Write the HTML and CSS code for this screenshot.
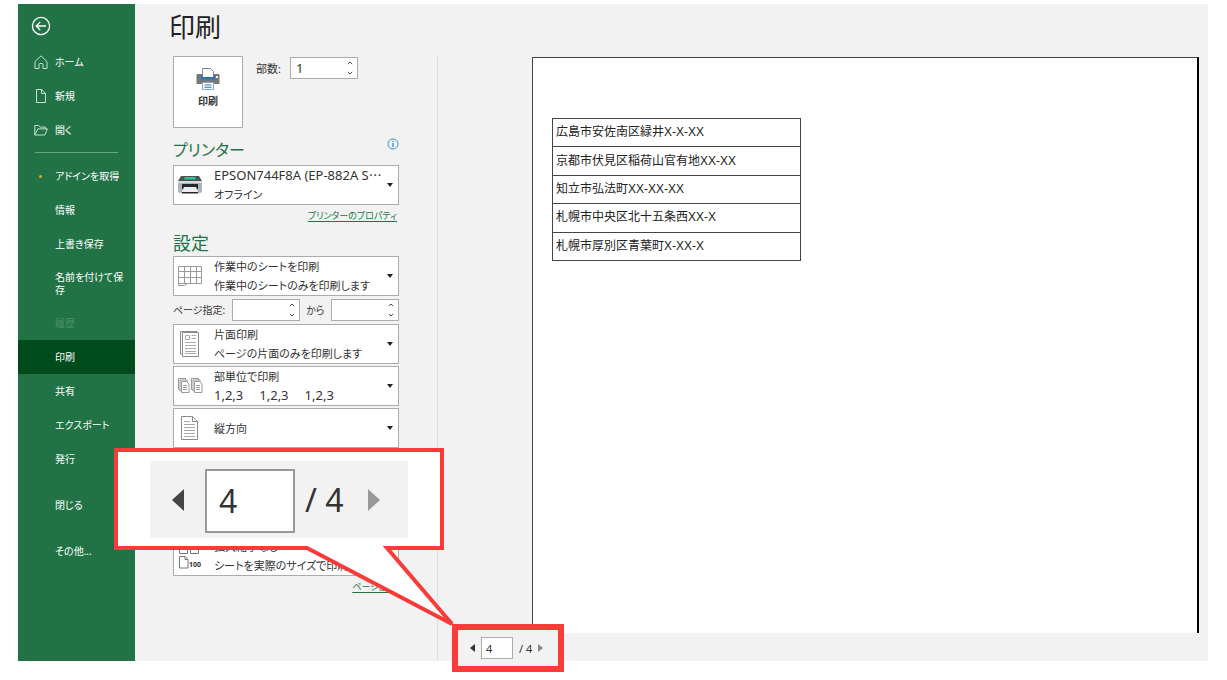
FILE: index.html
```html
<!DOCTYPE html>
<html lang="ja">
<head>
<meta charset="utf-8">
<meta name="viewport" content="width=device-width, initial-scale=1">
<title>印刷</title>
<link rel="stylesheet" href="styles.css">
</head>
<body>
<div class="app">
  <nav class="sidebar" aria-label="ファイル">
    <button class="back" type="button" aria-label="戻る">
      <svg width="20" height="20" viewBox="0 0 20 20" fill="none" stroke="#fff" stroke-width="1.3"><circle cx="10" cy="10" r="8.6"/><path d="M15 10H5.4M9.2 6L5.2 10l4 4"/></svg>
    </button>
    <a class="item" href="#"><svg class="item-icon" width="14" height="14" viewBox="0 0 14 14" fill="none" stroke="#c8dfd1"><path d="M1 6.600L7 .8l6 5.800v6.900H9V9.500q0-1-1-1H6q-1 0-1 1v4H1z"/></svg>ホーム</a>
    <a class="item" href="#"><svg class="item-icon" width="14" height="14" viewBox="0 0 14 14" fill="none" stroke="#c8dfd1"><path d="M2.500.5h5.200l3.800 3.800v9.200h-9zM7.500.5v4h4"/></svg>新規</a>
    <a class="item" href="#"><svg class="item-icon" width="14" height="14" viewBox="0 0 14 14" fill="none" stroke="#c8dfd1"><path d="M.8 12V2.500h4l1.500 1.600h5.200v1.800M.8 12l3-6.100h9.600L10.800 12z"/></svg>開く</a>
    <hr class="rule">
    <a class="item" href="#"><span class="item-icon dot"></span>アドインを取得</a>
    <a class="item" href="#">情報</a>
    <a class="item" href="#">上書き保存</a>
    <a class="item item-wrap" href="#">名前を付けて保存</a>
    <a class="item disabled" aria-disabled="true">履歴</a>
    <a class="item current" href="#" aria-current="page">印刷</a>
    <a class="item" href="#">共有</a>
    <a class="item" href="#">エクスポート</a>
    <a class="item" href="#">発行</a>
    <a class="item spaced" href="#">閉じる</a>
    <a class="item spaced" href="#">その他...</a>
  </nav>

  <main class="main">
    <h1 class="title">印刷</h1>
    <div class="columns">
      <section class="settings">
        <div class="print-row">
          <button class="print" type="button">
            <svg width="24" height="22" viewBox="0 0 24 22"><rect x="0.500" y="6" width="23" height="10" rx="1" fill="#777"/><path d="M6.500 9V.5h8l3 3V9" fill="#fff" stroke="#888"/><path d="M5 7h1.500v2h11V7H19v4.500H5z" fill="#2e75b6"/><rect x="20" y="8" width="2" height="2" fill="#fff"/><path d="M6.500 14.500h11v7h-11z" fill="#fff" stroke="#8aa9cc"/><path d="M8.500 17h7M8.500 19.300h7" stroke="#2e75b6"/></svg>
            <span>印刷</span>
          </button>
          <div class="copies">
            <label for="copies">部数:</label>
            <span class="spin"><input id="copies" type="text" inputmode="numeric" value="1"><svg width="6" height="14" viewBox="0 0 6 14" fill="none" stroke="#444"><path d="M.8 3L3 1l2.200 2M.8 11L3 13l2.200-2"/></svg></span>
          </div>
        </div>

        <div class="heading-row">
          <h2 class="kana">プリンター</h2>
          <svg width="12" height="12" viewBox="0 0 12 12" fill="none" stroke="#3b97d8"><circle cx="6" cy="6" r="5"/><path d="M6 5v4M6 2.800v1.200" stroke-width="1.400"/></svg>
        </div>
        <label class="picker">
          <svg class="pic" width="26" height="20" viewBox="0 0 26 20"><path d="M4 1h18l3 5H1z" fill="#4d5257"/><path d="M8 2h10l1 2.500H7z" fill="#2fc48d"/><path d="M1 6h24v10q0 2-2 2H3q-2 0-2-2z" fill="#a9b4bc"/><path d="M1 6h24v2H1z" fill="#d5dce0"/><rect x="5" y="9" width="16" height="5" fill="#25282b"/><path d="M7 12h12l2 5H5z" fill="#e9edf0"/><path d="M5 17h16v1.500H5z" fill="#25282b"/></svg>
          <span class="lines"><select class="latin"><option>EPSON744F8A (EP-882A S⋯</option></select><span>オフライン</span></span>
          <i class="caret"></i>
        </label>
        <a class="link" href="#">プリンターのプロパティ</a>

        <h2 class="set-heading">設定</h2>
        <div class="stack">
          <label class="picker">
            <svg class="pic" width="26" height="22" viewBox="0 0 26 22" fill="none" stroke="#9a9a9a"><path d="M1.500 1.500h23v17h-14l-3 2h-6zM1.500 6.500h23M1.500 12.500h23M7.500 1.500v17M13.500 1.500v17M19.500 1.500v17M1.500 18.500h9"/></svg>
            <span class="lines"><select><option>作業中のシートを印刷</option></select><span>作業中のシートのみを印刷します</span></span>
            <i class="caret"></i>
          </label>
          <div class="range">
            <label for="from">ページ指定:</label>
            <span class="spin"><input id="from" type="text" inputmode="numeric"><svg width="6" height="14" viewBox="0 0 6 14" fill="none" stroke="#444"><path d="M.8 3L3 1l2.200 2M.8 11L3 13l2.200-2"/></svg></span>
            <label for="to">から</label>
            <span class="spin"><input id="to" type="text" inputmode="numeric"><svg width="6" height="14" viewBox="0 0 6 14" fill="none" stroke="#444"><path d="M.8 3L3 1l2.200 2M.8 11L3 13l2.200-2"/></svg></span>
          </div>
          <label class="picker">
            <svg class="pic" width="26" height="26" viewBox="0 0 26 26" fill="none" stroke="#8b8b8b"><path d="M5.500 23h-2V.5H20v1"/><path d="M5.500 1.500h16v24h-16z" fill="#fff"/><path d="M8.500 4.500h4v4h-4zM14.500 4.500H19M14.500 7.500H19M8 11.500h11M8 14.500h11M8 17.500h11M8 20.500h11M8 22.500h11" stroke="#aaa"/></svg>
            <span class="lines"><select><option>片面印刷</option></select><span>ページの片面のみを印刷します</span></span>
            <i class="caret"></i>
          </label>
          <label class="picker">
            <svg class="pic" width="26" height="18" viewBox="0 0 26 18" fill="#fff" stroke="#999"><path d="M1.500 1.500h7v11h-7z"/><path d="M3 3h7v11H3z"/><path d="M4.500 4.500h5l2.500 2.500v8.500H4.500zM6 8.500h4M6 10.500h4M6 12.500h4"/><path d="M14.500 1.500h7v11h-7z"/><path d="M16 3h7v11h-7z"/><path d="M17.500 4.500h5L25 7v8.500h-7.500zM19 8.500h4M19 10.500h4M19 12.500h4"/></svg>
            <span class="lines"><select><option>部単位で印刷</option></select><span class="sets latin"><span>1,2,3</span><span>1,2,3</span><span>1,2,3</span></span></span>
            <i class="caret"></i>
          </label>
          <label class="picker">
            <svg class="pic" width="26" height="24" viewBox="0 0 26 24" fill="none" stroke="#8b8b8b"><path d="M4.500.5h11l5 5v18h-16zM15.500.5v5h5"/><path d="M7 5.500h6M7 8.500h11M7 11.500h11M7 14.500h11M7 17.500h11M7 20.500h11" stroke="#aaa"/></svg>
            <span class="lines"><select aria-label="印刷の向き"><option>縦方向</option></select></span>
            <i class="caret"></i>
          </label>
          <label class="picker scale">
            <svg class="pic" width="26" height="32" viewBox="0 0 26 32" fill="none" stroke="#777"><path d="M2.500 1.500h8v12h-8zM13.500 1.500h8v12h-8zM2.500 16.500h5.500l3 3v8.500H2.500zM8 16.500v3h3"/><text class="tiny" x="12" y="27">100</text></svg>
            <span class="lines"><select><option>拡大縮小なし</option></select><span>シートを実際のサイズで印刷します</span></span>
            <i class="caret"></i>
          </label>
        </div>
        <a class="link" href="#">ページ設定</a>
      </section>

      <section class="preview" aria-label="プレビュー">
        <div class="sheet">
          <table class="addresses">
            <tbody>
              <tr><td>広島市安佐南区緑井X-X-XX</td></tr>
              <tr><td>京都市伏見区稲荷山官有地XX-XX</td></tr>
              <tr><td>知立市弘法町XX-XX-XX</td></tr>
              <tr><td>札幌市中央区北十五条西XX-X</td></tr>
              <tr><td>札幌市厚別区青葉町X-XX-X</td></tr>
            </tbody>
          </table>
        </div>
      </section>
    </div>
  </main>

  <div class="callout">
    <svg class="callout-shape" width="350" height="182" viewBox="0 0 350 182"><path d="M4 4H330V102H275L340 178L195 102H4Z" fill="#fff" stroke="#fb3a3a" stroke-width="4"/></svg>
    <div class="zoomed">
      <button type="button" aria-label="前のページ"><svg width="12" height="22" viewBox="0 0 12 22"><path d="M12 0v22L0 11z" fill="#444"/></svg></button>
      <input type="text" value="4" aria-label="ページ">
      <span>/ 4</span>
      <button type="button" aria-label="次のページ"><svg width="12" height="22" viewBox="0 0 12 22"><path d="M0 0v22l12-11z" fill="#999"/></svg></button>
    </div>
  </div>

  <div class="pager">
    <button type="button" aria-label="前のページ"><svg width="5" height="8" viewBox="0 0 5 8"><path d="M5 0v8L0 4z" fill="#333"/></svg></button>
    <input type="text" value="4" aria-label="現在のページ">
    <span>/ 4</span>
    <button type="button" aria-label="次のページ"><svg width="5" height="8" viewBox="0 0 5 8"><path d="M0 0v8l5-4z" fill="#888"/></svg></button>
  </div>
</div>
</body>
</html>
```
FILE: styles.css
```css
* { box-sizing: border-box; }

body {
  margin: 0;
  padding: 4px 19px 19px 18px;
  background: #fff;
  color: #333;
  font: 11px/19px "Noto Sans", "Noto Sans CJK JP", sans-serif;
  font-feature-settings: "palt";
}

button, input, select {
  font: inherit;
  font-feature-settings: inherit;
  color: inherit;
  border: 0;
  padding: 0;
  margin: 0;
  background: none;
}

svg { display: block; }

h1, h2 { margin: 0; font-weight: 400; }

.app {
  position: relative;
  display: flex;
  min-height: calc(100vh - 23px);
  background: #f2f2f2;
}

/* Sidebar */
.sidebar {
  flex: 0 0 117px;
  background: #217346;
  color: #fff;
  font-size: 10px;
  line-height: 13px;
}

.back { display: block; padding: 12px 13px 9px; }

.item {
  display: flex;
  position: relative;
  align-items: center;
  min-height: 34px;
  padding: 0 8px 0 37px;
  color: inherit;
  text-decoration: none;
}

.item-icon { position: absolute; left: 16px; }
.dot { left: 21px; width: 3px; height: 3px; border-radius: 50%; background: #f0a81c; }
.item-wrap { min-height: 45px; }
.disabled { color: #4f9069; }
.current { background: #004b1c; }
.spaced { margin-top: 12px; }

.rule {
  height: 1px;
  margin: 5px 17px 6px;
  border: 0;
  background: #6ba583;
}

/* Print settings */
.main { flex: 1; display: flex; flex-direction: column; min-width: 0; }

.title {
  padding: 4px 0 0 34px;
  height: 52px;
  color: #222;
  font-size: 26px;
  line-height: 38px;
}

.columns { flex: 1; display: flex; }

.settings {
  flex: 0 0 303px;
  min-width: 0;
  padding: 0 38px;
  border-right: 1px solid #dedede;
}

.print-row { display: flex; gap: 13px; }

.print {
  display: flex;
  flex-direction: column;
  align-items: center;
  gap: 2px;
  width: 70px;
  height: 72px;
  padding-top: 11px;
  border: 1px solid #ababab;
  background: #fff;
  font-size: 10px;
  font-weight: 700;
}

.copies { display: flex; gap: 9px; align-items: center; height: 24px; }

.spin {
  flex: none;
  display: flex;
  align-items: center;
  width: 68px;
  height: 22px;
  padding: 0 4px 0 5px;
  border: 1px solid #ababab;
  background: #fff;
  font-size: 13px;
}
.spin input { flex: 1; min-width: 0; height: 20px; }

.heading-row { display: flex; justify-content: space-between; padding: 10px 0 3px; }
h2 { color: #217346; font-size: 18px; line-height: 24px; }
.kana { font-size: 16px; }

.picker {
  display: flex;
  align-items: center;
  height: 40px;
  padding: 0 5px 0 3px;
  border: 1px solid #ababab;
  background: #fff;
}

.pic { flex: none; }

.lines {
  flex: 1;
  display: flex;
  flex-direction: column;
  min-width: 0;
  padding-left: 11px;
  white-space: nowrap;
}
.lines select { appearance: none; width: 100%; height: 19px; }
.lines .latin { font-size: 13px; }

.sets { display: flex; gap: 16px; }

.caret { border: 3px solid transparent; border-top: 4px solid #222; border-bottom: 0; }

.link {
  display: block;
  width: fit-content;
  margin: 1px 2px 0 auto;
  color: #217346;
  font-size: 9px;
  text-decoration: underline;
  text-underline-offset: 2px;
}

.set-heading { margin: 6px 0 1px; }

.stack { display: flex; flex-direction: column; gap: 2px; }

.range { display: flex; align-items: center; justify-content: space-between; height: 24px; font-size: 10px; white-space: nowrap; }

.scale { margin-top: 86px; }
.tiny { fill: #333; stroke: none; font-size: 7px; font-weight: 700; }

/* Preview */
.preview { flex: 1; display: flex; padding: 1px 9px 28px 94px; }

.sheet {
  flex: 1;
  padding: 60px 19px;
  border: 1px solid #444;
  border-right: 2px solid #000;
  border-bottom: 0;
  background: #fff;
}

.addresses {
  width: 249px;
  height: 143px;
  border-collapse: collapse;
  color: #222;
  font-family: "Liberation Sans", "Noto Sans CJK JP", sans-serif;
  font-size: 12px;
  font-feature-settings: normal;
}
.addresses td { padding: 0 3px; border: 1px solid #444; }

/* Page navigation */
.pager {
  position: absolute;
  left: 434px;
  bottom: -11px;
  display: flex;
  align-items: center;
  gap: 6px;
  width: 112px;
  height: 48px;
  padding-left: 12px;
  border: 6px solid #fb3a3a;
  background: #f2f2f2;
}
.pager input { width: 32px; height: 22px; padding-left: 4px; border: 1px solid #ababab; background: #fff; }

.callout { position: absolute; left: 94px; top: 442px; }

.zoomed {
  position: absolute;
  left: 38px;
  top: 15px;
  display: flex;
  align-items: center;
  width: 258px;
  height: 77px;
  padding-left: 22px;
  background: #f2f2f2;
  font-size: 32px;
}
.zoomed input {
  width: 90px;
  height: 64px;
  margin: 2px 10px 0 21px;
  padding-left: 12px;
  border: 2px solid #999;
  background: #fff;
}
.zoomed span { margin-right: 24px; white-space: nowrap; }
```
